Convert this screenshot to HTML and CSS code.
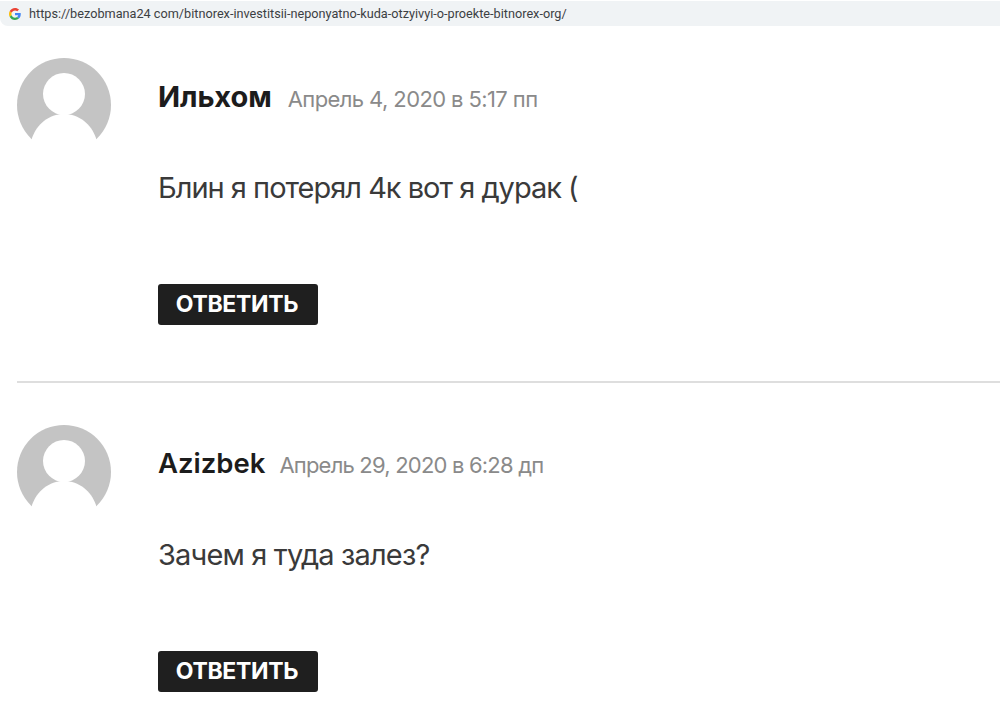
FILE: index.html
```html
<!DOCTYPE html>
<html lang="ru">
<head>
    <meta charset="UTF-8" />
    <title>Комментарии</title>
    <link rel="stylesheet" href="styles.css">
</head>
<body>

    <div class="url-bar">
        <svg class="g-icon" width="12" height="12" viewBox="0 0 48 48">
            <path fill="#EA4335" d="M24 9.5c3.5 0 6.7 1.2 9.2 3.600l6.900-6.900C35.900 2.400 30.500 0 24 0 14.600 0 6.500 5.400 2.600 13.200l8 6.200C12.500 13.700 17.800 9.500 24 9.500z"/>
            <path fill="#4285F4" d="M47 24.500c0-1.600-.1-3.100-.4-4.500H24v9h12.900c-.6 3-2.200 5.500-4.700 7.200l7.700 6C44.400 38 47 31.800 47 24.500z"/>
            <path fill="#FBBC05" d="M10.600 28.600c-.5-1.400-.8-3-.8-4.600s.3-3.200.8-4.600l-8-6.200C.9 16.500 0 20.100 0 24s.9 7.500 2.600 10.800l8-6.200z"/>
            <path fill="#34A853" d="M24 48c6.500 0 11.900-2.100 15.900-5.800l-7.700-6c-2.100 1.400-4.900 2.300-8.200 2.300-6.200 0-11.500-4.200-13.400-9.900l-8 6.200C6.500 42.600 14.600 48 24 48z"/>
        </svg>
        <span class="url-text">https://bezobmana24 com/bitnorex-investitsii-neponyatno-kuda-otzyivyi-o-proekte-bitnorex-org/</span>
    </div>

    <section class="comments">

        <article class="comment">
            <svg class="avatar" width="94" height="94" viewBox="0 0 94 94">
                <circle cx="47" cy="47" r="47" fill="#c4c4c4"/>
                <circle cx="47" cy="36" r="21" fill="#fff"/>
                <path d="M15 80C20 66 32 56 47 56s27 10 32 24L82 94H12z" fill="#fff"/>
            </svg>
            <div class="comment-body">
                <div class="comment-meta">
                    <span class="author author-big">Ильхом</span>
                    <span class="date">Апрель 4, 2020 в 5:17 пп</span>
                </div>
                <p class="comment-text">Блин я потерял 4к вот я дурак (</p>
                <a href="#" class="reply-button">ОТВЕТИТЬ</a>
            </div>
        </article>

        <article class="comment">
            <svg class="avatar" width="94" height="94" viewBox="0 0 94 94">
                <circle cx="47" cy="47" r="47" fill="#c4c4c4"/>
                <circle cx="47" cy="36" r="21" fill="#fff"/>
                <path d="M15 80C20 66 32 56 47 56s27 10 32 24L82 94H12z" fill="#fff"/>
            </svg>
            <div class="comment-body">
                <div class="comment-meta">
                    <span class="author">Azizbek</span>
                    <span class="date">Апрель 29, 2020 в 6:28 дп</span>
                </div>
                <p class="comment-text">Зачем я туда залез?</p>
                <a href="#" class="reply-button">ОТВЕТИТЬ</a>
            </div>
        </article>

    </section>

</body>
</html>
```

FILE: styles.css
```css
* {
    box-sizing: border-box;
    margin: 0;
    padding: 0;
}

body {
    font-family: 'Inter', 'Liberation Sans', sans-serif;
    background-color: #fff;
    color: #222;
    overflow: hidden;
}

.url-bar {
    display: flex;
    align-items: center;
    height: 25px;
    margin-top: 1px;
    padding-left: 9px;
    background-color: #f0f3f5;
    border-radius: 0 0 0 8px;
}

.g-icon {
    margin-right: 8px;
}

.url-text {
    font-family: 'Roboto', 'Liberation Sans', sans-serif;
    font-size: 12.7px;
    color: #3c4043;
}

.comments {
    padding: 32px 0 0 17px;
}

.comment {
    display: flex;
    align-items: flex-start;
    height: 325px;
    border-bottom: 2px solid #dedede;
}

.comment + .comment {
    padding-top: 42px;
    border-bottom: none;
}

.avatar {
    flex-shrink: 0;
    margin-right: 47px;
}

.comment-body {
    display: flex;
    flex-direction: column;
    align-items: flex-start;
}

.comment-meta {
    display: flex;
    align-items: baseline;
    height: 40px;
    padding-top: 21px;
}

.author {
    font-size: 27.5px;
    font-weight: 600;
    color: #1c1c1c;
    margin-right: 14px;
}

.author-big {
    font-size: 29px;
    font-weight: 700;
    margin-right: 16px;
}

.date {
    font-size: 22px;
    letter-spacing: -0.6px;
    color: #8a8a8a;
}

.comment + .comment .date {
    letter-spacing: -0.8px;
}

.comment-text {
    margin-top: 72px;
    font-size: 29px;
    letter-spacing: -1px;
    color: #3a3a3a;
    line-height: 36px;
}

.comment + .comment .comment-text {
    letter-spacing: -0.85px;
}

.reply-button {
    display: block;
    margin-top: 78px;
    width: 160px;
    height: 41px;
    padding-right: 2px;
    line-height: 41px;
    text-align: center;
    background-color: #1f1f1f;
    color: #fff;
    border-radius: 3px;
    font-size: 23px;
    font-weight: 700;
    letter-spacing: -0.3px;
    text-decoration: none;
}
```
